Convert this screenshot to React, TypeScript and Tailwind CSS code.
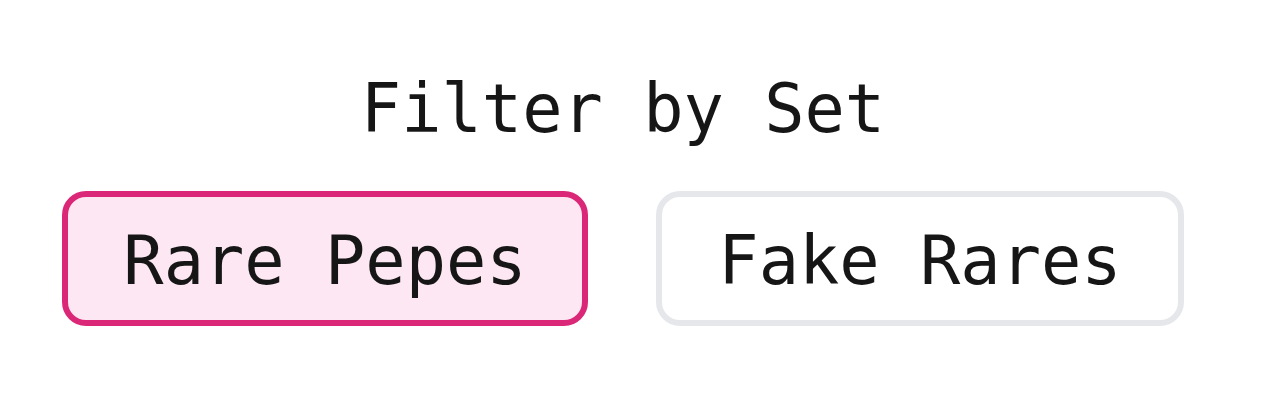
export default function App() {
  const sets = [
    { name: "Rare Pepes", active: true },
    { name: "Fake Rares", active: false },
  ];

  return (
    <main className="h-[420px] w-full bg-white font-['DejaVu_Sans_Mono',monospace] text-[#161616]">
      <div className="w-[1246px] flex flex-col items-center pt-[76px]">
        {/* TITLE */}
        <h2 className="text-[67px] leading-none">Filter by Set</h2>

        {/* SET BUTTONS */}
        <div className="mt-[48px] flex gap-[68px]">
          {sets.map((s) =>
            s.active ? (
              <button
                key={s.name}
                className="w-[526px] h-[135px] pt-[6px] flex items-center justify-center rounded-[24px] border-[6px] border-[#db2777] bg-[#fce7f3] text-[67px] leading-none"
              >
                {s.name}
              </button>
            ) : (
              <button
                key={s.name}
                className="w-[528px] h-[135px] pt-[6px] flex items-center justify-center rounded-[24px] border-[6px] border-[#e5e7eb] bg-white text-[67px] leading-none"
              >
                {s.name}
              </button>
            )
          )}
        </div>
      </div>
    </main>
  );
}
